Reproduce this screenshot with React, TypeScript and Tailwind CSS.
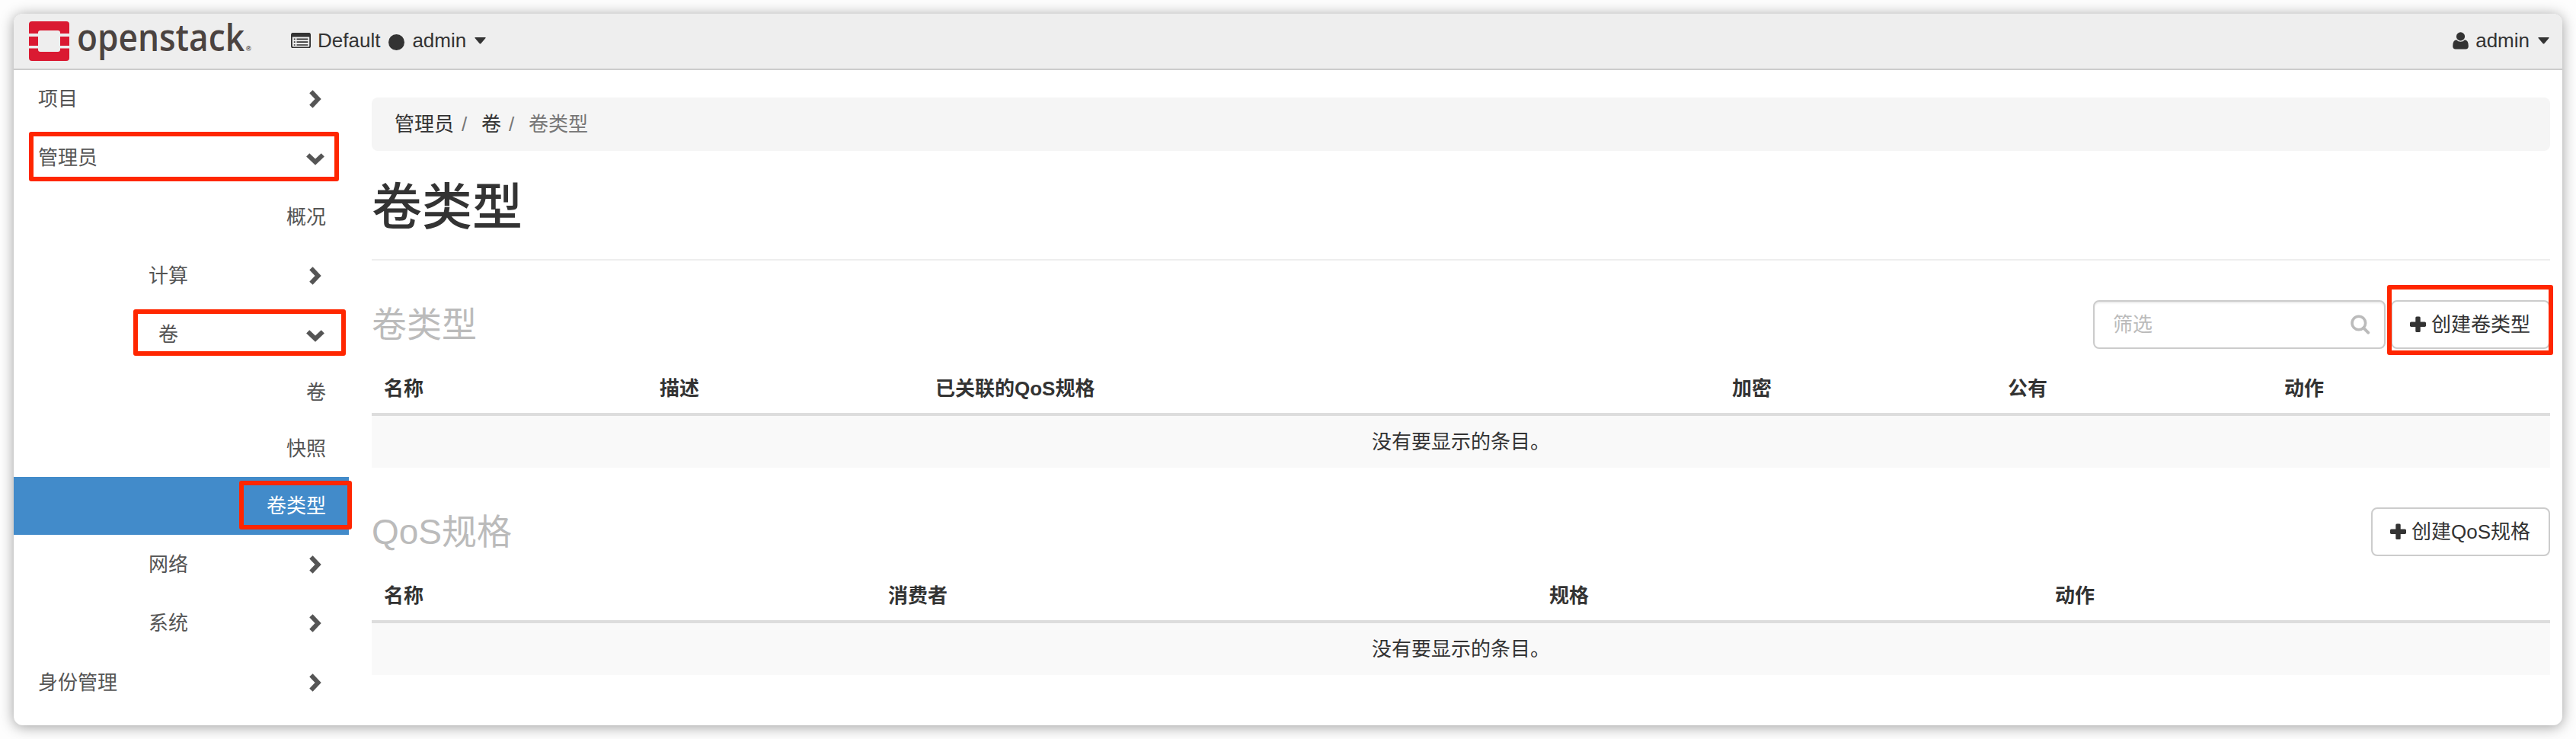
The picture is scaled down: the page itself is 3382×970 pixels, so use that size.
import type { ReactNode } from "react";

const ChevronRight = () => (
  <svg className="h-6 w-4 shrink-0" viewBox="0 0 16 24" fill="none">
    <path d="M2.4 2.2 L11.6 12 L2.4 21.8" stroke="#555" strokeWidth="6" strokeLinejoin="miter" />
  </svg>
);

const ChevronDown = () => (
  <svg className="h-4 w-6 shrink-0" viewBox="0 0 24 16" fill="none">
    <path d="M2.2 2.4 L12 11.6 L21.8 2.4" stroke="#555" strokeWidth="6" strokeLinejoin="miter" />
  </svg>
);

const Caret = () => (
  <svg className="h-[9px] w-[15px] shrink-0" viewBox="0 0 15 9">
    <path d="M0.8 0 H14.2 Q15 0.4 14.5 1.1 L8.3 8.2 Q7.5 9 6.7 8.2 L0.5 1.1 Q0 0.4 0.8 0 Z" fill="#333" />
  </svg>
);

const Plus = () => (
  <svg className="h-[22px] w-[21px] shrink-0" viewBox="0 0 21 22">
    <rect x="7.3" y="0.5" width="6.4" height="20.5" rx="1.6" fill="#333" />
    <rect x="0" y="7.5" width="21" height="6.4" rx="1.6" fill="#333" />
  </svg>
);

const SearchIcon = () => (
  <svg className="h-[26px] w-[26px] shrink-0" viewBox="0 0 26 26" fill="none">
    <circle cx="10.8" cy="11" r="8.8" stroke="#bbb" strokeWidth="3.6" />
    <path d="M17 17.4 L23.2 23.6" stroke="#bbb" strokeWidth="4" strokeLinecap="round" />
  </svg>
);

const ContextIcon = () => (
  <svg className="h-5 w-[26px] shrink-0" viewBox="0 0 26 20" fill="none">
    <rect x="0.9" y="0.9" width="24.2" height="18.6" rx="2" stroke="#333" strokeWidth="1.8" />
    <path d="M0.5 2.5 Q0.5 0 3 0 H23 Q25.5 0 25.5 2.5 V5.6 H0.5 Z" fill="#333" />
    <path d="M3.8 8.4h1.8M3.8 12.2h1.8M3.8 16h1.8M7.5 8.4h14.8M7.5 12.2h14.8M7.5 16h14.8" stroke="#333" strokeWidth="1.7" />
  </svg>
);

const UserIcon = () => (
  <svg className="h-[23px] w-[21px] shrink-0" viewBox="0 0 21 23" fill="#333">
    <path d="M5 10.3 Q7.3 12.8 10.5 12.8 Q13.7 12.8 16 10.3 Q20.8 10.8 20.8 18.5 Q20.8 22.6 17 22.6 H4 Q0.2 22.6 0.2 18.5 Q0.2 10.8 5 10.3 Z" />
    <circle cx="10.5" cy="5.9" r="5.6" />
  </svg>
);

const Logo = () => (
  <svg className="h-[72px] w-[300px] shrink-0 overflow-visible" viewBox="38 18 300 72">
    <g fill="#da1a32">
      <path d="M42 28 H87 Q91 28 91 32 V44 H79 V43 Q79 40 76 40 H53 Q50 40 50 43 V44 H38 V32 Q38 28 42 28 Z" />
      <path d="M38 48 H50 V60 H38 Z" />
      <path d="M79 48 H91 V60 H79 Z" />
      <path d="M42 80 H87 Q91 80 91 76 V63.6 H79 V65 Q79 68 76 68 H53 Q50 68 50 65 V63.6 H38 V76 Q38 80 42 80 Z" />
    </g>
    <text
      x="101"
      y="67.3"
      fill="#4b4340"
      textLength="220"
      lengthAdjust="spacingAndGlyphs"
      className="font-['Open_Sans',sans-serif] text-[49px] leading-[49px] font-semibold"
    >
      openstack
    </text>
    <text x="323" y="67" fill="#4b4340" className="font-['Liberation_Sans',sans-serif] text-[9px] leading-[9px] font-bold">
      ®
    </text>
  </svg>
);

type NavRow = { label: string; box: string; icon?: "right" | "down" };

const nav: NavRow[] = [
  { label: "项目", box: "h-[76px] pl-8 text-[#555]", icon: "right" },
  { label: "管理员", box: "h-[78px] pl-8 text-[#555]", icon: "down" },
  { label: "概况", box: "h-[78px] text-[#555]" },
  { label: "计算", box: "h-[76px] pl-[177px] text-[#555]", icon: "right" },
  { label: "卷", box: "h-[78px] pl-[190px] text-[#555]", icon: "down" },
  { label: "卷", box: "h-[74px] text-[#555]" },
  { label: "快照", box: "h-[74px] text-[#555]" },
  { label: "卷类型", box: "h-[76px] bg-[#428bca] text-white" },
  { label: "网络", box: "h-[78px] pl-[177px] text-[#555]", icon: "right" },
  { label: "系统", box: "h-[76px] pl-[177px] text-[#555]", icon: "right" },
  { label: "身份管理", box: "h-[80px] pl-8 text-[#555]", icon: "right" },
];

const Sidebar = () => (
  <nav className="w-[440px] shrink-0">
    {nav.map((row, i) => (
      <div key={i} className={`flex items-center ${row.icon ? "justify-between" : "justify-end pr-[30px]"} ${row.box}`}>
        <span>{row.label}</span>
        {row.icon === "right" && (
          <span className="pr-9">
            <ChevronRight />
          </span>
        )}
        {row.icon === "down" && (
          <span className="pt-1 pr-8">
            <ChevronDown />
          </span>
        )}
      </div>
    ))}
  </nav>
);

const ActionButton = ({ children }: { children: ReactNode }) => (
  <button className="flex h-16 items-center gap-[7px] rounded-lg border-2 border-[#ccc] bg-white pr-6 pl-[23px] whitespace-nowrap text-[#333]">
    <Plus />
    <span>{children}</span>
  </button>
);

type Column = { title: string; width: string };

const DataTable = ({ columns }: { columns: Column[] }) => (
  <div className="mt-5">
    <div className="flex h-[68px] items-center border-b-4 border-[#ddd] font-bold">
      {columns.map((c) => (
        <div key={c.title} className={`shrink-0 pl-4 ${c.width}`}>
          {c.title}
        </div>
      ))}
    </div>
    <div className="flex h-[68px] items-center justify-center bg-[#f9f9f9]">没有要显示的条目。</div>
  </div>
);

const typeColumns: Column[] = [
  { title: "名称", width: "w-[362px]" },
  { title: "描述", width: "w-[362px]" },
  { title: "已关联的QoS规格", width: "w-[1046px]" },
  { title: "加密", width: "w-[362px]" },
  { title: "公有", width: "w-[363px]" },
  { title: "动作", width: "w-[365px]" },
];

const qosColumns: Column[] = [
  { title: "名称", width: "w-[662px]" },
  { title: "消费者", width: "w-[868px]" },
  { title: "规格", width: "w-[664px]" },
  { title: "动作", width: "w-[666px]" },
];

export default function App() {
  return (
    <div className="relative h-[970px] w-[3382px] overflow-hidden bg-[#fdfdfd] pt-[18px] pl-[18px] font-['Liberation_Sans','Noto_Sans_CJK_SC',sans-serif] text-[26px] leading-[36px] text-[#333]">
      <div className="h-[934px] w-[3346px] rounded-xl bg-white shadow-[0_2px_18px_rgba(0,0,0,0.38)]">
        <header className="flex h-[74px] items-center justify-between rounded-t-xl border-b-2 border-[#ccc] bg-[#eee] pr-[17px] pl-5">
          <div className="flex items-center">
            <Logo />
            <div className="-mt-0.5 ml-11 flex items-center">
              <ContextIcon />
              <span className="ml-[9px]">Default</span>
              <span className="mt-[5px] ml-[11px] h-[21px] w-[21px] rounded-full bg-[#333]" />
              <span className="ml-[10px]">admin</span>
              <span className="ml-[11px]">
                <Caret />
              </span>
            </div>
          </div>
          <div className="-mt-0.5 flex items-center">
            <UserIcon />
            <span className="ml-[9px]">admin</span>
            <span className="ml-[11px]">
              <Caret />
            </span>
          </div>
        </header>

        <div className="flex">
          <Sidebar />
          <main className="ml-[30px] w-[2860px] pt-9">
            <div className="flex h-[70px] items-center rounded-lg bg-[#f5f5f5] pl-[30px]">
              <span>管理员</span>
              <span className="w-9 pl-[10px] text-[#777]">/</span>
              <span>卷</span>
              <span className="w-9 pl-[10px] text-[#777]">/</span>
              <span className="text-[#777]">卷类型</span>
            </div>

            <h1 className="h-36 border-b-2 border-[#eee] pt-[34px] text-[66px] leading-[80px] font-medium">卷类型</h1>

            <section className="pt-[52px]">
              <div className="flex h-16 items-center justify-between">
                <h2 className="text-[46px] leading-[64px] text-[#bbb]">卷类型</h2>
                <div className="flex gap-[7px]">
                  <div className="flex h-16 w-96 items-center justify-between rounded-lg border-2 border-[#ccc] pr-[18px] pl-6 text-[#bbb] shadow-[inset_0_2px_2px_rgba(0,0,0,0.075)]">
                    <span>筛选</span>
                    <SearchIcon />
                  </div>
                  <ActionButton>创建卷类型</ActionButton>
                </div>
              </div>
              <DataTable columns={typeColumns} />
            </section>

            <section className="pt-[52px]">
              <div className="flex h-16 items-center justify-between">
                <h2 className="text-[46px] leading-[64px] text-[#bbb]">QoS规格</h2>
                <ActionButton>创建QoS规格</ActionButton>
              </div>
              <DataTable columns={qosColumns} />
            </section>
          </main>
        </div>
      </div>

      <div className="absolute top-[173px] left-[38px] h-[65px] w-[407px] rounded-[3px] border-[6px] border-[#ff2600]" />
      <div className="absolute top-[406px] left-[175px] h-[61px] w-[279px] rounded-[3px] border-[6px] border-[#ff2600]" />
      <div className="absolute top-[631px] left-[314px] h-[64px] w-[148px] rounded-[3px] border-[6px] border-[#ff2600]" />
      <div className="absolute top-[374px] left-[3134px] h-[92px] w-[218px] rounded-[3px] border-[6px] border-[#ff2600]" />
    </div>
  );
}
